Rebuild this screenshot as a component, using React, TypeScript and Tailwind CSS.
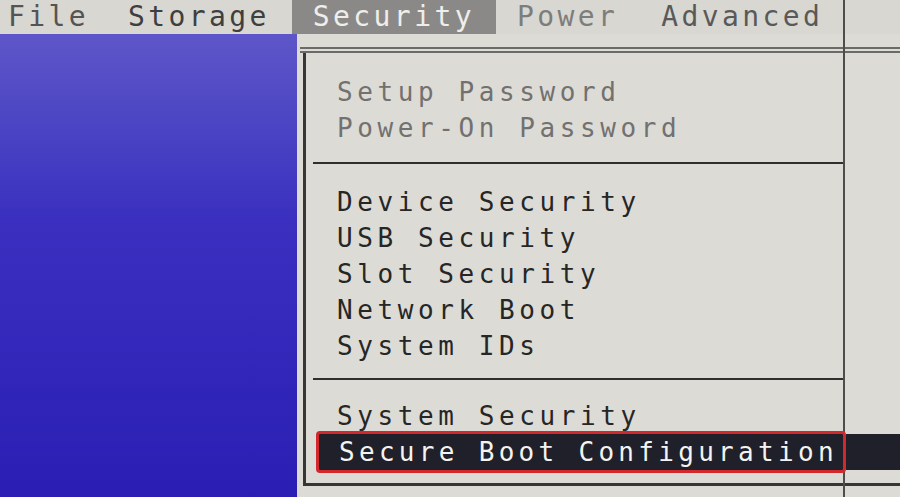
const MONO = "font-['DejaVu_Sans_Mono','Liberation_Mono',monospace]";

const Row = ({ label, dim }: { label: string; dim?: boolean }) => (
  <div
    className={`flex h-[36px] items-center whitespace-nowrap pl-[31px] ${
      dim ? "text-[#727170]" : "text-[#262626]"
    }`}
  >
    {label}
  </div>
);

const Separator = () => <div className="ml-[7px] h-[2px] w-[532px] bg-[#2f2f2f]" />;

export default function App() {
  return (
    <div
      className={`relative h-[497px] w-[900px] overflow-hidden bg-[#dcdbd6] ${MONO} leading-none`}
    >
      {/* menu bar */}
      <div className="flex h-[34px] items-center whitespace-nowrap bg-[#d8d7d2] pl-[8px] text-[28px] tracking-[3.4px]">
        <span className="text-[#545454]">File</span>
        <span className="ml-[39px] text-[#3f3f3f]">Storage</span>
        <span className="ml-[22px] flex h-full items-center bg-[#8b8987] px-[21px] text-[#eeeeec]">
          Security
        </span>
        <span className="ml-[21px] text-[#7d7d7b]">Power</span>
        <span className="ml-[43px] text-[#595959]">Advanced</span>
      </div>

      <div className="flex h-[463px]">
        <div className="w-[297px] bg-gradient-to-b from-[#5e56c8] via-[#3a2fbf] via-40% to-[#2a1db4]" />

        <div className="flex-1 pl-[3px] pt-[13px]">
          <div className="h-[6px] border-y-2 border-[#6a6a68]" />
          <div className="ml-[3px] border-b-[3px] border-l-[3px] border-[#363636] text-[26px] tracking-[4.6px]">
            <div className="pb-[16px] pt-[21px]">
              <Row label="Setup Password" dim />
              <Row label="Power-On Password" dim />
            </div>
            <Separator />
            <div className="pb-[14px] pt-[20px]">
              <Row label="Device Security" />
              <Row label="USB Security" />
              <Row label="Slot Security" />
              <Row label="Network Boot" />
              <Row label="System IDs" />
            </div>
            <Separator />
            <div className="pb-[13px] pt-[18px]">
              <Row label="System Security" />
              <div className="relative z-10 -my-[3px] ml-[10px] flex h-[42px] items-center">
                <div className="flex h-full w-[530px] shrink-0 items-center whitespace-nowrap rounded-[4px] border-[3px] border-[#d3282c] bg-[#1f2029] pl-[20px] tracking-[4.3px] text-[#f3f3f1]">
                  Secure Boot Configuration
                </div>
                <div className="h-[36px] flex-1 bg-[#1f2029]" />
              </div>
            </div>
          </div>
        </div>
      </div>

      {/* right frame line */}
      <div className="absolute left-[843px] top-0 h-full w-[2px] bg-[#4d4d4b]" />
    </div>
  );
}
